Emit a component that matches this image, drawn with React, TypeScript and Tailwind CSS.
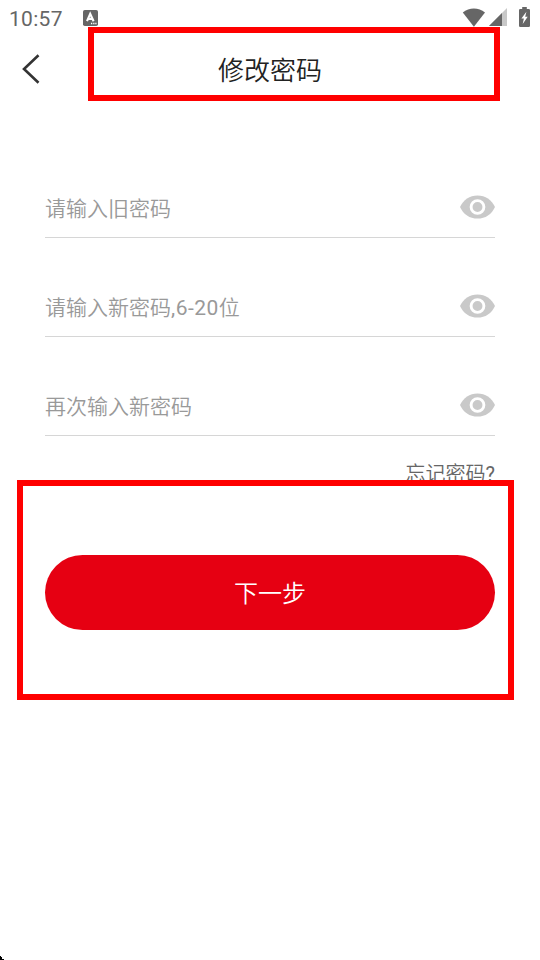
const fields = [
  { key: 'old', label: '请输入旧密码' },
  { key: 'new', label: '请输入新密码,6-20位' },
  { key: 'confirm', label: '再次输入新密码' },
];

function EyeIcon() {
  return (
    <svg width="35" height="24" viewBox="0 0 35 24" className="mb-0.5 shrink-0">
      <path d="M0 12C3.4 4.6 9.6 0.4 17.5 0.4S31.6 4.6 35 12C31.6 19.4 25.4 23.6 17.5 23.6S3.4 19.4 0 12Z" fill="#c9c9c9" />
      <circle cx="17.5" cy="12" r="6.4" fill="none" stroke="#fff" strokeWidth="2.9" />
    </svg>
  );
}

function StatusBar() {
  return (
    <div className="flex h-9 items-center pl-[9px] pr-[10px]">
      <span className="w-[74px] pt-0.5 text-[21px] leading-6 tracking-[0.3px] text-[#666]">10:57</span>
      <svg width="15" height="16" viewBox="0 0 15 16">
        <rect width="15" height="16" rx="1.8" fill="#666" />
        <path d="M4 11.2L7.2 3.8L10.6 11.2M5.2 8.9H9.4" fill="none" stroke="#fff" strokeWidth="2.1" />
        <path d="M8 13.5h1.3M10.2 13.5h1.3M12.3 13.5h1.2" stroke="#fff" strokeWidth="1.4" />
      </svg>
      <div className="ml-auto flex items-center pb-0.5">
        <svg width="23" height="19" viewBox="0 0 23 19">
          <path d="M0.8 4.6C7.2-0.9 16.6-0.9 23 4.6L11.9 18.7Z" fill="#666" />
        </svg>
        <svg width="18" height="18" viewBox="0 0 18 18" className="ml-1">
          <path d="M0 18L18 0V18Z" fill="#c8c8c8" />
          <path d="M0 18L13 5V18Z" fill="#666" />
        </svg>
        <svg width="11" height="20" viewBox="0 0 11 20" className="ml-3">
          <path d="M3.2 0H7.8V2H9.7Q11 2 11 3.3V18.7Q11 20 9.7 20H1.3Q0 20 0 18.7V3.3Q0 2 1.3 2H3.2Z" fill="#666" />
          <path d="M7.4 4.8L2.4 11.6H4.9L3.7 17L8.7 9.8H6.2Z" fill="#fff" />
        </svg>
      </div>
    </div>
  );
}

export default function App() {
  return (
    <div className="relative h-[960px] w-[540px] overflow-hidden bg-white font-[Roboto,'Noto_Sans_CJK_SC',sans-serif]">
      <StatusBar />
      <header className="grid h-[66px] grid-cols-[62px_1fr_62px] items-center">
        <svg width="18" height="30" viewBox="0 0 18 30" className="ml-[22px]">
          <path d="M16.5 1.3L2 15L16.5 28.7" fill="none" stroke="#333" strokeWidth="2.6" />
        </svg>
        <h1 className="pt-1 text-center text-[26px] leading-9 font-[350] text-[#222]">修改密码</h1>
      </header>

      <main className="px-[45px] pt-[76px]">
        <div className="flex flex-col gap-[39px]">
          {fields.map(f => (
            <div key={f.key} className="flex h-[60px] items-center justify-between border-b border-[#d6d6d6]">
              <span className="pt-0.5 text-[21px] leading-8 font-[350] text-[#999]">
                {f.label.split(/([,\d-]+)/).map((part, i) => (
                  <span key={i} className={i % 2 ? 'font-normal tracking-[0.5px]' : ''}>{part}</span>
                ))}
              </span>
              <EyeIcon />
            </div>
          ))}
        </div>
        <div className="mt-[23px] text-right text-[20px] leading-[30px] font-[350] text-[#666]">
          忘记密码<span className="font-normal">?</span>
        </div>
        <button className="mt-[66px] flex h-[75px] w-full items-center justify-center rounded-full bg-[#e60012] pt-0.5 text-[24px] font-[350] text-white">
          下一步
        </button>
      </main>

      {/* highlight frames over the title and the submit area */}
      <div className="absolute top-[27px] left-[88px] h-[74px] w-[412px] border-6 border-[#ff0000]" />
      <div className="absolute top-[480px] left-[17px] h-[220px] w-[497px] border-6 border-[#ff0000]" />
      <svg width="4" height="4" viewBox="0 0 4 4" className="absolute bottom-0 left-0">
        <path d="M0 0H1V1H2V3H4V4H0Z" fill="#000" />
      </svg>
    </div>
  );
}
